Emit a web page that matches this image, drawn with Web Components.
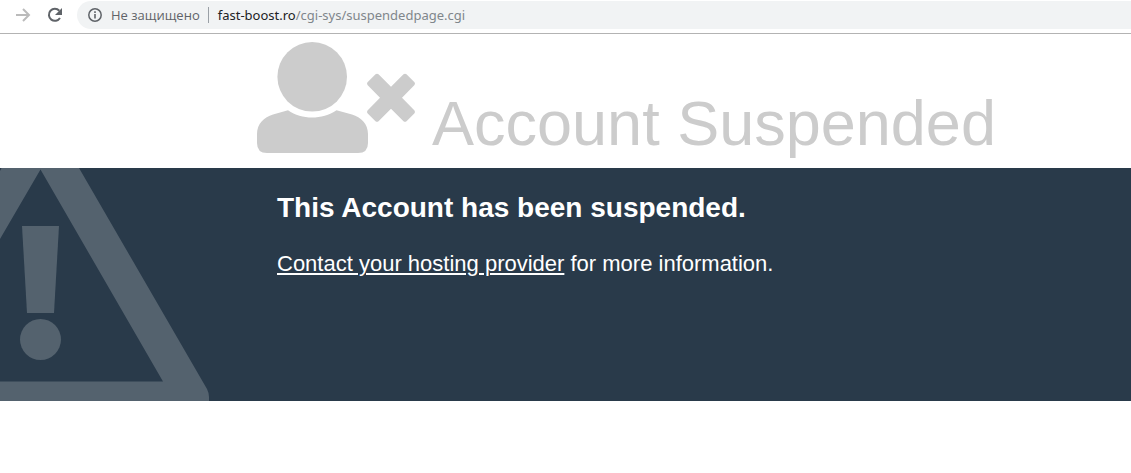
<!DOCTYPE html>
<html lang="en">
<head>
<meta charset="utf-8">
<meta name="viewport" content="width=device-width, initial-scale=1">
<title>Account Suspended</title>
<style>
body { margin: 0; background: #fff; font-family: "Liberation Sans", Arial, sans-serif; }
</style>
</head>
<body>
<browser-bar>
  <span slot="status">Не защищено</span>
  <span slot="host">fast-boost.ro</span>
  <span slot="path">/cgi-sys/suspendedpage.cgi</span>
</browser-bar>
<main>
  <status-heading>Account Suspended</status-heading>
  <info-panel>
    <span slot="title">This Account has been suspended.</span>
    <contact-link href="#contact">Contact your hosting provider</contact-link> for more information.
  </info-panel>
</main>
<script>
class ShadowElement extends HTMLElement {
  constructor() {
    super();
    this.attachShadow({ mode: "open" }).innerHTML = this.constructor.markup;
  }
}

class BrowserBar extends ShadowElement {
  static markup = `
    <style>
      :host { display: block; border-bottom: 1px solid #b3b3b3; font: 13px/18px "Open Sans", "Noto Sans", sans-serif; color: #5f6368; }
      nav { display: flex; align-items: center; height: 33px; padding-left: 12px; box-sizing: border-box; padding-bottom: 3px; }
      button { font: inherit; color: inherit; background: none; border: 0; padding: 0; display: flex; align-items: center; }
      svg { display: block; }
      .forward { color: #bbb; margin-right: 10px; }
      .reload { margin-right: 11px; }
      .box { flex: 1; display: flex; align-items: center; height: 28px; padding-left: 10px; border-radius: 14px 0 0 14px; background: #f1f3f4; min-width: 0; }
      .security { gap: 8px; white-space: nowrap; }
      .rule { width: 1px; height: 16px; background: #9aa0a6; margin: 0 9px 0 8px; }
      .address { display: flex; outline: 0; white-space: nowrap; color: #80868b; font-family: "Noto Sans", "Open Sans", sans-serif; }
      .host { color: #202124; }
    </style>
    <nav aria-label="Browser">
      <button class="forward" aria-label="Forward" disabled>
        <svg width="22" height="22" viewBox="0 0 22 22" fill="none" stroke="currentColor" stroke-width="2"><path d="M4 11h13M11 5l6 6-6 6"/></svg>
      </button>
      <button class="reload" aria-label="Reload">
        <svg width="22" height="22" viewBox="0 0 22 22"><path d="M16 14A6 6 0 1 1 15.300 6.700" fill="none" stroke="currentColor" stroke-width="2"/><path d="M18 4v7h-7z" fill="currentColor"/></svg>
      </button>
      <div class="box">
        <button class="security">
          <svg width="16" height="16" viewBox="0 0 16 16"><circle cx="8" cy="8" r="6.200" fill="none" stroke="currentColor" stroke-width="1.500"/><path d="M7.200 7h1.600v4.500H7.200zM7.200 4.300h1.600v1.600H7.200z" fill="currentColor"/></svg>
          <slot name="status"></slot>
        </button>
        <span class="rule"></span>
        <div class="address" role="textbox" contenteditable="true" spellcheck="false" aria-label="Address"><span class="host"><slot name="host"></slot></span><slot name="path"></slot></div>
      </div>
    </nav>`;
}

class UserRemovedIcon extends ShadowElement {
  static markup = `
    <style>:host { display: block; } svg { display: block; }</style>
    <svg width="159" height="112" viewBox="0 0 159 112" fill="currentColor" aria-hidden="true">
      <circle cx="55.200" cy="34.800" r="34.800"/>
      <path d="M31 68.300C45 78 65 78 79.500 68.300L95 72.500C104 75 111 82 111 92V101Q111 111 101 111H10Q0 111 0 101V92C0 82 7 75 16 72.500Z"/>
      <path d="M118.500 32.300Q120 31 121.500 32.300L134 44.800L146.500 32.300Q148 31 149.500 32.300L157.500 40.300Q158.500 41.500 157.500 43L145 55.800L157.500 68.500Q158.500 70 157.500 71.200L149.500 79.200Q148 80.500 146.500 79.200L134 66.800L121.500 79.200Q120 80.500 118.500 79.200L110.500 71.200Q109.500 70 110.500 68.500L123 55.800L110.500 43Q109.500 41.500 110.500 40.300Z"/>
    </svg>`;
}

class StatusHeading extends ShadowElement {
  static markup = `
    <style>
      :host { display: block; color: #ccc; }
      header { display: flex; align-items: flex-end; gap: 16px; padding: 8px 16px 9px 257px; }
      user-removed-icon { flex: none; padding-bottom: 5px; }
      h1 { margin: 0; font-size: 63px; line-height: 72px; font-weight: 400; white-space: nowrap; }
    </style>
    <header><user-removed-icon></user-removed-icon><h1><slot></slot></h1></header>`;
}

class ContactLink extends ShadowElement {
  static observedAttributes = ["href"];
  static markup = `
    <style>:host { display: inline; } a { color: inherit; text-decoration: underline; text-decoration-thickness: 2px; text-underline-offset: 2px; }</style>
    <a><slot></slot></a>`;
  attributeChangedCallback(name, previous, value) {
    this.shadowRoot.querySelector("a").setAttribute(name, value);
  }
}

class InfoPanel extends ShadowElement {
  static markup = `
    <style>
      :host { display: block; position: relative; overflow: hidden; min-height: 233px; background: #293a4a; color: #fff; }
      .warning { position: absolute; left: 0; top: 0; fill: #54626e; }
      .content { position: relative; padding: 20px 16px 20px 277px; }
      h2 { margin: 0; font-size: 28px; line-height: 40px; }
      p { margin: 22px 0 0; font-size: 22px; line-height: 28px; }
    </style>
    <svg class="warning" width="210" height="233" viewBox="0 0 210 233" aria-hidden="true">
      <path fill-rule="evenodd" d="M1.500 0H79L207 221Q209 225 209 229V233H0V213.500H163L40.500 1.500L0 71V3Z"/>
      <path d="M22 58H59L54 145H27Z"/>
      <circle cx="40.500" cy="171.500" r="20.500"/>
    </svg>
    <section class="content"><h2><slot name="title"></slot></h2><p><slot></slot></p></section>`;
}

customElements.define("browser-bar", BrowserBar);
customElements.define("user-removed-icon", UserRemovedIcon);
customElements.define("status-heading", StatusHeading);
customElements.define("contact-link", ContactLink);
customElements.define("info-panel", InfoPanel);
</script>
</body>
</html>
